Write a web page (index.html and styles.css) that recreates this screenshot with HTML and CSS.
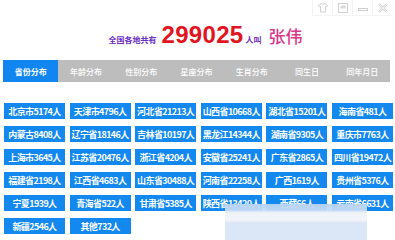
FILE: index.html
```html
<!DOCTYPE html>
<html lang="zh-CN">
<head>
<meta charset="utf-8">
<title>同名查询</title>
<link rel="stylesheet" href="styles.css">
</head>
<body>
<div class="app">
  <div class="titlebar">
    <span class="wbtn"><svg width="12" height="12" viewBox="0 0 12 12"><path d="M1.5 3.5 L4 1.5 Q6 3 8 1.5 L10.5 3.5 L9.5 5 L8.5 4.5 L8.5 10 L3.5 10 L3.5 4.5 L2.5 5 Z" fill="none" stroke="#cfcfcf" stroke-width="1"/></svg></span>
    <span class="wbtn"><svg width="12" height="12" viewBox="0 0 12 12"><rect x="1.5" y="1.5" width="9" height="9" fill="none" stroke="#cfcfcf"/><rect x="3.5" y="3.5" width="5" height="3" fill="#dadada"/></svg></span>
    <span class="wbtn"><svg width="12" height="12" viewBox="0 0 12 12"><rect x="1.5" y="6.5" width="9" height="2" fill="none" stroke="#cfcfcf"/></svg></span>
    <span class="wbtn last"><svg width="12" height="12" viewBox="0 0 12 12"><path d="M2 2 L10 10 M10 2 L2 10" stroke="#cfcfcf" stroke-width="2.2"/><path d="M2 2 L10 10 M10 2 L2 10" stroke="#fff" stroke-width="0.8"/></svg></span>
  </div>
  <div class="headline">
    <span class="lbl">全国各地共有</span>
    <span class="count">299025</span>
    <span class="lbl small">人叫</span>
    <span class="name">张伟</span>
  </div>
  <nav class="tabs">
    <span class="tab active">省份分布</span>
    <span class="tab">年龄分布</span>
    <span class="tab">性别分布</span>
    <span class="tab">星座分布</span>
    <span class="tab">生肖分布</span>
    <span class="tab">同生日</span>
    <span class="tab">同年月日</span>
  </nav>
  <div class="grid">
    <span class="cell">北京市5174人</span>
    <span class="cell">天津市4796人</span>
    <span class="cell">河北省21213人</span>
    <span class="cell">山西省10668人</span>
    <span class="cell">湖北省15201人</span>
    <span class="cell">海南省481人</span>
    <span class="cell">内蒙古8408人</span>
    <span class="cell">辽宁省18146人</span>
    <span class="cell">吉林省10197人</span>
    <span class="cell">黑龙江14344人</span>
    <span class="cell">湖南省9305人</span>
    <span class="cell">重庆市7763人</span>
    <span class="cell">上海市3645人</span>
    <span class="cell">江苏省20476人</span>
    <span class="cell">浙江省4204人</span>
    <span class="cell">安徽省25241人</span>
    <span class="cell">广东省2865人</span>
    <span class="cell">四川省19472人</span>
    <span class="cell">福建省2198人</span>
    <span class="cell">江西省4683人</span>
    <span class="cell">山东省30488人</span>
    <span class="cell">河南省22258人</span>
    <span class="cell">广西1619人</span>
    <span class="cell">贵州省5376人</span>
    <span class="cell">宁夏1939人</span>
    <span class="cell">青海省522人</span>
    <span class="cell">甘肃省5385人</span>
    <span class="cell">陕西省13420人</span>
    <span class="cell">西藏66人</span>
    <span class="cell">云南省6631人</span>
    <span class="cell">新疆2546人</span>
    <span class="cell">其他732人</span>
  </div>
  <div class="toast"></div>
</div>
</body>
</html>
```

FILE: styles.css
```css
html, body {
  margin: 0;
  padding: 0;
  background: #ffffff;
}
body {
  font-family: "Noto Sans CJK SC", "Noto Sans", sans-serif;
}
.app {
  position: relative;
  width: 395px;
  height: 240px;
  overflow: hidden;
}
.titlebar {
  display: flex;
  justify-content: flex-end;
  padding-right: 3px;
  height: 16px;
}
.wbtn {
  display: flex;
  align-items: center;
  justify-content: center;
  width: 19px;
  height: 15px;
  border-left: 1px solid #f2f2f2;
  border-bottom: 1px solid #f4f4f4;
}
.headline {
  display: flex;
  align-items: baseline;
  justify-content: center;
  padding-left: 16px;
  height: 32px;
  margin-top: 5px;
}
.lbl {
  font-size: 8px;
  font-weight: 700;
  color: #6b2fc4;
  margin-right: 5px;
}
.lbl.small {
  margin-left: 2px;
}
.count {
  font-family: "Liberation Sans", Arial, sans-serif;
  font-size: 24px;
  font-weight: 700;
  color: #e0151f;
  letter-spacing: 0.3px;
}
.name {
  font-size: 17px;
  font-weight: 500;
  color: #d9378b;
  margin-left: 2px;
}
.tabs {
  display: grid;
  grid-template-columns: repeat(7, 1fr);
  margin: 7px 5px 0 3px;
  height: 22px;
  background: #bdbdbd;
}
.tab {
  display: flex;
  align-items: center;
  justify-content: center;
  font-size: 8px;
  font-weight: 500;
  color: #ffffff;
}
.tab.active {
  background: #1286f0;
  color: #ffffff;
  font-weight: 700;
}
.grid {
  display: grid;
  grid-template-columns: repeat(6, 61px);
  column-gap: 4.6px;
  row-gap: 6.8px;
  margin: 21px 0 0 4px;
}
.cell {
  display: flex;
  align-items: center;
  justify-content: center;
  height: 16.2px;
  background: #1388ee;
  color: #ffffff;
  font-size: 9px;
  font-weight: 700;
  letter-spacing: -0.6px;
  white-space: nowrap;
  overflow: hidden;
}
.toast {
  position: absolute;
  left: 225px;
  top: 204px;
  width: 142px;
  height: 36px;
  background: linear-gradient(to bottom,
    rgba(184, 211, 242, 0.95) 0px,
    rgba(196, 219, 245, 0.95) 6px,
    rgba(240, 243, 248, 0.97) 9px,
    rgba(240, 243, 248, 0.97) 16px,
    rgba(218, 230, 247, 0.97) 19px,
    rgba(218, 230, 247, 0.97) 36px);
}
```
